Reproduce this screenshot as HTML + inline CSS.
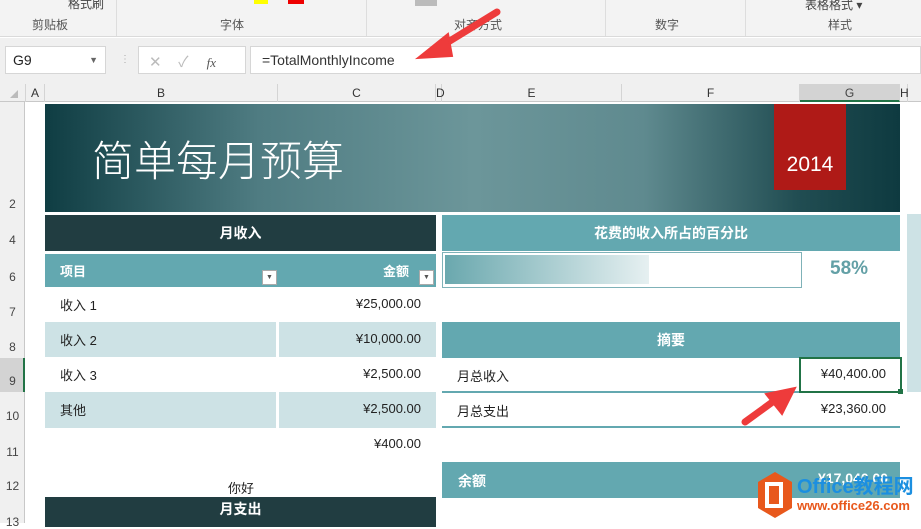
<!DOCTYPE html>
<html><head><meta charset="utf-8"><style>
*{margin:0;padding:0;box-sizing:border-box}
body{width:921px;height:523px;overflow:hidden;background:#fff;font-family:"Liberation Sans","Noto Sans CJK SC",sans-serif;position:relative;font-size:13px;color:#222}
.a{position:absolute}
.c{display:flex;align-items:center;justify-content:center}
.rh{position:absolute;left:0;width:25px;text-align:center;font-size:12px;color:#444}
.ch{position:absolute;top:84px;height:18px;font-size:12px;color:#333;text-align:center;line-height:18px;border-right:1px solid #d4d4d4}
</style></head><body>
<div class="a" style="left:0;top:0;width:921px;height:37px;background:#f3f3f3;border-bottom:1px solid #dadada"></div>
<div class="a" style="left:32px;top:16px;font-size:12px;color:#555">剪贴板</div>
<div class="a" style="left:220px;top:16px;font-size:12px;color:#555">字体</div>
<div class="a" style="left:454px;top:16px;font-size:12px;color:#555">对齐方式</div>
<div class="a" style="left:655px;top:16px;font-size:12px;color:#555">数字</div>
<div class="a" style="left:828px;top:16px;font-size:12px;color:#555">样式</div>
<div class="a" style="left:805px;top:-4px;font-size:12px;color:#444">表格格式 ▾</div>
<div class="a" style="left:68px;top:-5px;font-size:12px;color:#444">格式刷</div>
<div class="a" style="left:254px;top:0;width:14px;height:4px;background:#ff0"></div>
<div class="a" style="left:288px;top:0;width:16px;height:4px;background:#e00"></div>
<div class="a" style="left:415px;top:0;width:22px;height:6px;background:#bbb"></div>
<div class="a" style="left:116px;top:0;width:1px;height:36px;background:#ddd"></div>
<div class="a" style="left:366px;top:0;width:1px;height:36px;background:#ddd"></div>
<div class="a" style="left:605px;top:0;width:1px;height:36px;background:#ddd"></div>
<div class="a" style="left:745px;top:0;width:1px;height:36px;background:#ddd"></div>
<div class="a" style="left:0;top:38px;width:921px;height:46px;background:#f0f0f0"></div>
<div class="a" style="left:5px;top:46px;width:101px;height:28px;background:#fff;border:1px solid #d6d6d6;padding:5px 7px;font-size:14px">G9<span style="float:right;font-size:9px;color:#666;margin-top:3px">▼</span></div>
<div class="a" style="left:120px;top:54px;font-size:10px;color:#aaa">⋮</div>
<div class="a" style="left:138px;top:46px;width:108px;height:28px;background:#fff;border:1px solid #d6d6d6;color:#bbb;font-size:15px;padding:4px 10px">✕ &nbsp;&nbsp; ✓ <i style="color:#555;font-family:'Liberation Serif';font-size:13px;margin-left:14px">fx</i></div>
<div class="a" style="left:250px;top:46px;width:671px;height:28px;background:#fff;border:1px solid #d6d6d6;padding:5px 11px;font-size:14px;color:#333">=TotalMonthlyIncome</div>
<div class="a" style="left:0;top:84px;width:921px;height:18px;background:#f0f0f0;border-bottom:1px solid #c8c8c8"></div>
<div class="ch" style="left:0;width:26px"><span style="display:block;width:0;height:0;border-left:8px solid transparent;border-bottom:8px solid #bbb;margin:6px 0 0 10px"></span></div>
<div class="ch" style="left:26px;width:19px">A</div>
<div class="ch" style="left:45px;width:233px">B</div>
<div class="ch" style="left:278px;width:158px">C</div>
<div class="ch" style="left:436px;width:6px">D</div>
<div class="ch" style="left:442px;width:180px">E</div>
<div class="ch" style="left:622px;width:178px">F</div>
<div class="ch" style="left:800px;width:100px;background:#d3d3d3;border-bottom:2px solid #217346;color:#444">G</div>
<div class="ch" style="left:900px;width:8px">H</div>
<div class="a" style="left:0;top:102px;width:25px;height:421px;background:#f0f0f0;border-right:1px solid #c8c8c8"></div>
<div class="rh" style="top:197px">2</div><div class="rh" style="top:233px">4</div><div class="rh" style="top:270px">6</div><div class="rh" style="top:305px">7</div><div class="rh" style="top:340px">8</div>
<div class="a" style="left:0;top:358px;width:25px;height:34px;background:#d3d3d3;border-right:2px solid #217346"></div>
<div class="rh" style="top:374px">9</div><div class="rh" style="top:409px">10</div><div class="rh" style="top:445px">11</div><div class="rh" style="top:479px">12</div><div class="rh" style="top:515px">13</div>
<div class="a" style="left:45px;top:104px;width:855px;height:108px;background:linear-gradient(90deg,#0f3d43 0%,#4f7c82 25%,#6c969a 50%,#5f8a8f 70%,#214d52 88%,#0e3a40 100%)"></div>
<div class="a" style="left:92px;top:133px;font-size:42px;color:#fff;font-family:'Noto Sans CJK SC',sans-serif;font-weight:300;line-height:52px">简单每月预算</div>
<div class="a c" style="left:774px;top:104px;width:72px;height:86px;background:#af1a17;color:#fff;font-size:21px;padding-top:36px">2014</div>
<div class="a c" style="left:45px;top:215px;width:391px;height:36px;background:#213d41;color:#fff;font-weight:bold;font-size:14px">月收入</div>
<div class="a" style="left:45px;top:254px;width:391px;height:33px;background:#63a8b0;color:#fff;font-weight:bold;font-size:13px"><span class="a" style="left:15px;top:7px">项目</span><span class="a" style="left:338px;top:7px">金额</span></div>
<div class="a" style="left:262px;top:270px;width:15px;height:15px;background:#fff;border:1px solid #aaa;font-size:7px;color:#555;text-align:center;line-height:14px">▼</div>
<div class="a" style="left:419px;top:270px;width:15px;height:15px;background:#fff;border:1px solid #aaa;font-size:7px;color:#555;text-align:center;line-height:14px">▼</div>
<div class="a" style="left:45px;top:322px;width:231px;height:35px;background:#cde2e5"></div>
<div class="a" style="left:279px;top:322px;width:157px;height:35px;background:#cde2e5"></div>
<div class="a" style="left:45px;top:392px;width:231px;height:36px;background:#cde2e5"></div>
<div class="a" style="left:279px;top:392px;width:157px;height:36px;background:#cde2e5"></div>
<div class="a" style="left:60px;top:295px">收入 1</div><div class="a" style="left:60px;top:330px">收入 2</div><div class="a" style="left:60px;top:365px">收入 3</div><div class="a" style="left:60px;top:400px">其他</div>
<div class="a" style="right:500px;top:296px">¥25,000.00</div><div class="a" style="right:500px;top:331px">¥10,000.00</div><div class="a" style="right:500px;top:366px">¥2,500.00</div><div class="a" style="right:500px;top:401px">¥2,500.00</div><div class="a" style="right:500px;top:436px">¥400.00</div>
<div class="a" style="left:228px;top:478px">你好</div>
<div class="a c" style="left:45px;top:497px;width:391px;height:30px;background:#213d41;color:#fff;font-weight:bold;font-size:14px;padding-bottom:6px">月支出</div>
<div class="a c" style="left:442px;top:215px;width:458px;height:36px;background:#63a8b0;color:#fff;font-weight:bold;font-size:14px">花费的收入所占的百分比</div>
<div class="a" style="left:442px;top:252px;width:360px;height:36px;border:1px solid #7fb2b8"></div>
<div class="a" style="left:445px;top:255px;width:204px;height:29px;background:linear-gradient(90deg,#6aa8ae,#e6f0f1)"></div>
<div class="a" style="left:830px;top:258px;color:#63a0a6;font-weight:bold;font-size:19px">58%</div>
<div class="a c" style="left:442px;top:322px;width:458px;height:36px;background:#63a8b0;color:#fff;font-weight:bold;font-size:14px">摘要</div>
<div class="a" style="left:457px;top:366px">月总收入</div><div class="a" style="left:457px;top:401px">月总支出</div>
<div class="a" style="left:442px;top:391px;width:458px;height:2px;background:#63a8b0"></div>
<div class="a" style="left:442px;top:426px;width:458px;height:2px;background:#63a8b0"></div>
<div class="a" style="left:799px;top:357px;width:103px;height:36px;border:2px solid #217346"></div>
<div class="a" style="left:898px;top:389px;width:5px;height:5px;background:#217346"></div>
<div class="a" style="right:35px;top:366px">¥40,400.00</div><div class="a" style="right:35px;top:401px">¥23,360.00</div>
<div class="a" style="left:442px;top:462px;width:458px;height:36px;background:#63a8b0;color:#fff;font-weight:bold;font-size:14px"><span class="a" style="left:16px;top:9px">余额</span><span class="a" style="left:376px;top:8px">¥17,040.00</span></div>
<div class="a" style="left:907px;top:214px;width:14px;height:178px;background:#cde2e5"></div>
<svg class="a" style="left:0;top:0" width="921" height="523">
<g stroke="#ee3b3b" stroke-width="7" stroke-linecap="round" fill="#ee3b3b">
<line x1="497" y1="12" x2="440" y2="47"/><polygon points="418,58 448,34 452,56" stroke-width="2"/>
<line x1="745" y1="422" x2="778" y2="398"/><polygon points="795,388 766,394 782,414" stroke-width="2"/>
</g></svg>
<svg class="a" style="left:755px;top:470px" width="40" height="50"><polygon points="20,2 37,12 37,38 20,48 3,38 3,12" fill="#e8581c"/><rect x="12" y="14" width="14" height="22" fill="none" stroke="#fff" stroke-width="4"/></svg>
<div class="a" style="left:797px;top:476px;font-size:20px;font-weight:bold;color:#1c8fe0;line-height:22px">Office教程网</div>
<div class="a" style="left:797px;top:498px;font-size:13px;font-weight:bold;color:#e8581c">www.office26.com</div>
</body></html>
